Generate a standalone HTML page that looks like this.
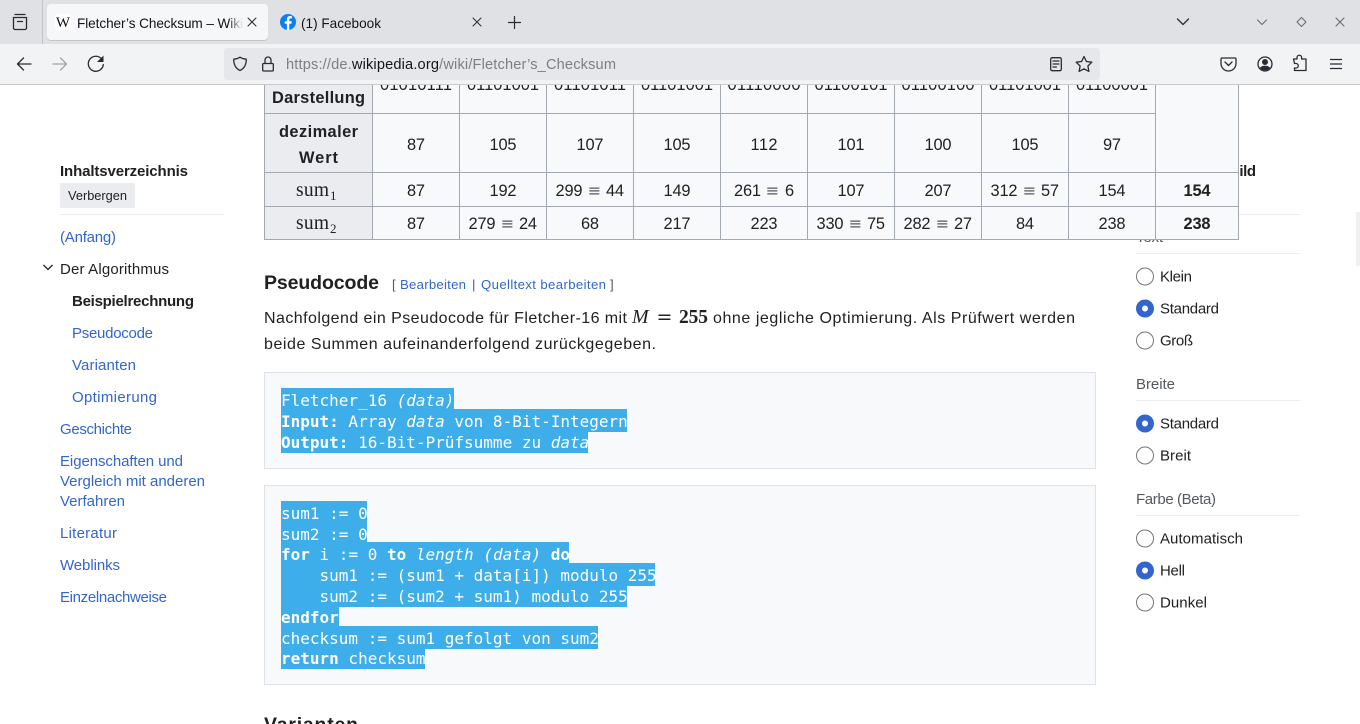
<!DOCTYPE html>
<html lang="de"><head><meta charset="utf-8"><title>Fletcher’s Checksum – Wikipedia</title>
<style>
html,body{margin:0;padding:0;background:#fff;overflow:hidden;width:1360px;height:724px}
svg{display:block}
text{font-family:"Liberation Sans",sans-serif;font-size:15px;fill:#202122;white-space:pre}
.b{font-weight:700}
.l{fill:#3366cc}
.g{fill:#54595d}
.n{font-size:16.4px;text-anchor:middle}
.h{font-size:16.4px;font-weight:700;text-anchor:middle}
.q{font-family:"DejaVu Sans",sans-serif;font-size:16px;text-anchor:middle;fill:#54595d}
.m{font-family:"Liberation Serif",serif;font-size:19.5px}
.s{font-family:"Liberation Serif",serif;font-size:13px}
.c{font-family:"DejaVu Sans Mono",monospace;font-size:16px;fill:#fff}
.c .b{font-weight:700}
.c .i{font-style:italic}
.e{font-size:13.200px}
.p{font-size:16px}
.ui{font-size:13.600px;fill:#15141a}
.ic{fill:none;stroke:#2b2a33;stroke-width:1.300;stroke-linecap:round;stroke-linejoin:round}
.tl line{stroke:#a2a9b1;stroke-width:1}
</style></head><body>
<svg width="1360" height="724" viewBox="0 0 1360 724" xmlns="http://www.w3.org/2000/svg">
<rect width="1360" height="724" fill="#fff"/>
<rect x="1356" y="212" width="4" height="54" fill="#f0f0f0"/>

<!-- left sidebar -->
<text class="b" x="60" y="176" textLength="128">Inhaltsverzeichnis</text>
<rect x="60" y="183" width="75" height="25" rx="2" fill="#eaecf0"/>
<text x="68" y="200" style="font-size:12.800px" textLength="59">Verbergen</text>
<rect x="60" y="214" width="164" height="1" fill="#eaecf0"/>
<text class="l" x="60" y="242" textLength="56">(Anfang)</text>
<path d="M43.500 265l4.500 4.500 4.500-4.500" fill="none" stroke="#202122" stroke-width="1.300"/>
<text x="60" y="274" textLength="109">Der Algorithmus</text>
<text class="b" x="72" y="306" textLength="122">Beispielrechnung</text>
<text class="l" x="72" y="338" textLength="81">Pseudocode</text>
<text class="l" x="72" y="370" textLength="64">Varianten</text>
<text class="l" x="72" y="402" textLength="85">Optimierung</text>
<text class="l" x="60" y="434" textLength="72">Geschichte</text>
<text class="l" x="60" y="466" textLength="123">Eigenschaften und</text>
<text class="l" x="60" y="486" textLength="145">Vergleich mit anderen</text>
<text class="l" x="60" y="506" textLength="65">Verfahren</text>
<text class="l" x="60" y="538" textLength="57">Literatur</text>
<text class="l" x="60" y="570" textLength="60">Weblinks</text>
<text class="l" x="60" y="602" textLength="107">Einzelnachweise</text>

<!-- right sidebar -->
<text class="b" x="1229" y="176" textLength="27">Bild</text>
<rect x="1136" y="214" width="164" height="1" fill="#eaecf0"/>
<text class="g" x="1136" y="242" textLength="27">Text</text>
<rect x="1136" y="253" width="164" height="1" fill="#eaecf0"/>
<g fill="#fff" stroke="#72777d" stroke-width="1">
<circle cx="1145" cy="276.500" r="8.500"/><circle cx="1145" cy="340.500" r="8.500"/>
<circle cx="1145" cy="455.500" r="8.500"/><circle cx="1145" cy="538.500" r="8.500"/><circle cx="1145" cy="602.500" r="8.500"/>
</g>
<g fill="#3366cc">
<circle cx="1145" cy="308.500" r="9"/><circle cx="1145" cy="423.500" r="9"/><circle cx="1145" cy="570.500" r="9"/>
</g>
<g fill="#fff">
<circle cx="1145" cy="308.500" r="3"/><circle cx="1145" cy="423.500" r="3"/><circle cx="1145" cy="570.500" r="3"/>
</g>
<text x="1160" y="281.500" textLength="32">Klein</text>
<text x="1160" y="313.500" textLength="59">Standard</text>
<text x="1160" y="345.500" textLength="33">Groß</text>
<text class="g" x="1136" y="389" textLength="39">Breite</text>
<rect x="1136" y="400" width="164" height="1" fill="#eaecf0"/>
<text x="1160" y="428.500" textLength="59">Standard</text>
<text x="1160" y="460.500" textLength="31">Breit</text>
<text class="g" x="1136" y="504" textLength="80">Farbe (Beta)</text>
<rect x="1136" y="515" width="164" height="1" fill="#eaecf0"/>
<text x="1160" y="543.500" textLength="83">Automatisch</text>
<text x="1160" y="575.500" textLength="25">Hell</text>
<text x="1160" y="607.500" textLength="47">Dunkel</text>

<!-- table -->
<rect x="264" y="80" width="974" height="160" fill="#f8f9fa"/>
<rect x="264" y="80" width="108" height="160" fill="#eaecf0"/>
<g class="tl">
<line x1="264.500" y1="80" x2="264.500" y2="240"/>
<line x1="372.500" y1="80" x2="372.500" y2="240"/>
<line x1="459.500" y1="80" x2="459.500" y2="240"/>
<line x1="546.500" y1="80" x2="546.500" y2="240"/>
<line x1="633.500" y1="80" x2="633.500" y2="240"/>
<line x1="720.500" y1="80" x2="720.500" y2="240"/>
<line x1="807.500" y1="80" x2="807.500" y2="240"/>
<line x1="894.500" y1="80" x2="894.500" y2="240"/>
<line x1="981.500" y1="80" x2="981.500" y2="240"/>
<line x1="1068.500" y1="80" x2="1068.500" y2="240"/>
<line x1="1155.500" y1="80" x2="1155.500" y2="240"/>
<line x1="1238.500" y1="80" x2="1238.500" y2="240"/>
<line x1="264" y1="113.500" x2="1155" y2="113.500"/>
<line x1="264" y1="172.500" x2="1239" y2="172.500"/>
<line x1="264" y1="206.500" x2="1239" y2="206.500"/>
<line x1="264" y1="239.500" x2="1239" y2="239.500"/>
</g>
<text class="h" x="318.500" y="103" textLength="93">Darstellung</text>
<text class="h" x="318.500" y="137" textLength="79">dezimaler</text>
<text class="h" x="318.500" y="163" textLength="39">Wert</text>
<text class="m" x="296" y="196" textLength="33">sum</text><text class="s" x="330" y="200">1</text>
<text class="m" x="296" y="229" textLength="33">sum</text><text class="s" x="330" y="233">2</text>

<text class="n" x="416" y="90" textLength="72">01010111</text>
<text class="n" x="503" y="90" textLength="72">01101001</text>
<text class="n" x="590" y="90" textLength="72">01101011</text>
<text class="n" x="677" y="90" textLength="72">01101001</text>
<text class="n" x="764" y="90" textLength="73">01110000</text>
<text class="n" x="851" y="90" textLength="73">01100101</text>
<text class="n" x="938" y="90" textLength="73">01100100</text>
<text class="n" x="1025" y="90" textLength="72">01101001</text>
<text class="n" x="1112" y="90" textLength="72">01100001</text>

<text class="n" x="416" y="150" textLength="18">87</text>
<text class="n" x="503" y="150" textLength="27">105</text>
<text class="n" x="590" y="150" textLength="27">107</text>
<text class="n" x="677" y="150" textLength="27">105</text>
<text class="n" x="764" y="150" textLength="27">112</text>
<text class="n" x="851" y="150" textLength="27">101</text>
<text class="n" x="938" y="150" textLength="27">100</text>
<text class="n" x="1025" y="150" textLength="27">105</text>
<text class="n" x="1112" y="150" textLength="18">97</text>

<text class="n" x="416" y="196" textLength="18">87</text>
<text class="n" x="503" y="196" textLength="27">192</text>
<text class="n" x="569" y="196" textLength="27">299</text><text class="q" x="594.500" y="196">≡</text><text class="n" x="615" y="196" textLength="18">44</text>
<text class="n" x="677" y="196" textLength="27">149</text>
<text class="n" x="747.500" y="196" textLength="27">261</text><text class="q" x="772.500" y="196">≡</text><text class="n" x="789.500" y="196">6</text>
<text class="n" x="851" y="196" textLength="27">107</text>
<text class="n" x="938" y="196" textLength="27">207</text>
<text class="n" x="1004" y="196" textLength="27">312</text><text class="q" x="1029.500" y="196">≡</text><text class="n" x="1050" y="196" textLength="18">57</text>
<text class="n" x="1112" y="196" textLength="27">154</text>
<text class="h" x="1197" y="196" textLength="27">154</text>

<text class="n" x="416" y="229" textLength="18">87</text>
<text class="n" x="482" y="229" textLength="27">279</text><text class="q" x="507.500" y="229">≡</text><text class="n" x="528" y="229" textLength="18">24</text>
<text class="n" x="590" y="229" textLength="18">68</text>
<text class="n" x="677" y="229" textLength="27">217</text>
<text class="n" x="764" y="229" textLength="27">223</text>
<text class="n" x="830" y="229" textLength="27">330</text><text class="q" x="855.500" y="229">≡</text><text class="n" x="876" y="229" textLength="18">75</text>
<text class="n" x="917" y="229" textLength="27">282</text><text class="q" x="942.500" y="229">≡</text><text class="n" x="963" y="229" textLength="18">27</text>
<text class="n" x="1025" y="229" textLength="18">84</text>
<text class="n" x="1112" y="229" textLength="27">238</text>
<text class="h" x="1197" y="229" textLength="27">238</text>

<!-- heading + paragraph -->
<text class="b" x="264" y="289" style="font-size:19.500px" textLength="115">Pseudocode</text>
<text class="e g" x="392" y="289">[</text>
<text class="e l" x="400" y="289" textLength="66">Bearbeiten</text>
<text class="e g" x="472" y="289">|</text>
<text class="e l" x="481" y="289" textLength="125">Quelltext bearbeiten</text>
<text class="e g" x="610" y="289">]</text>
<text class="p" x="264" y="323" textLength="363">Nachfolgend ein Pseudocode für Fletcher-16 mit</text>
<text class="m" x="632" y="323" style="font-style:italic;font-size:20px">M</text>
<text x="664.500" y="323" style="font-family:'DejaVu Sans',sans-serif;font-size:19px;text-anchor:middle;fill:#202122">=</text>
<text class="m" x="679" y="323" style="font-size:19.500px;font-weight:700" textLength="29">255</text>
<text class="p" x="713" y="323" textLength="362">ohne jegliche Optimierung. Als Prüfwert werden</text>
<text class="p" x="264" y="349" textLength="392">beide Summen aufeinanderfolgend zurückgegeben.</text>

<!-- code box 1 -->
<rect x="264.500" y="372.500" width="831" height="96" fill="#f8f9fa" stroke="#dfe2e8"/>
<g fill="#3daee9">
<rect x="281" y="388" width="173" height="21"/>
<rect x="281" y="409" width="346" height="23"/>
<rect x="281" y="432" width="307" height="21"/>
</g>
<text class="c" x="281" y="406">Fletcher_16 <tspan class="i">(data)</tspan></text>
<text class="c" x="281" y="427"><tspan class="b">Input:</tspan> Array <tspan class="i">data</tspan> von 8-Bit-Integern</text>
<text class="c" x="281" y="448"><tspan class="b">Output:</tspan> 16-Bit-Prüfsumme zu <tspan class="i">data</tspan></text>

<!-- code box 2 -->
<rect x="264.500" y="485.500" width="831" height="199" fill="#f8f9fa" stroke="#dfe2e8"/>
<g fill="#3daee9">
<rect x="281" y="501" width="86" height="41"/>
<rect x="281" y="542" width="288" height="21"/>
<rect x="281" y="563" width="374" height="23"/>
<rect x="281" y="586" width="346" height="21"/>
<rect x="281" y="607" width="58" height="19"/>
<rect x="281" y="626" width="317" height="23"/>
<rect x="281" y="649" width="144" height="20"/>
</g>
<text class="c" x="281" y="519">sum1 := 0</text>
<text class="c" x="281" y="540">sum2 := 0</text>
<text class="c" x="281" y="560"><tspan class="b">for</tspan> i := 0 <tspan class="b">to</tspan> <tspan class="i">length (data)</tspan> <tspan class="b">do</tspan></text>
<text class="c" x="281" y="581">    sum1 := (sum1 + data[i]) modulo 255</text>
<text class="c" x="281" y="602">    sum2 := (sum2 + sum1) modulo 255</text>
<text class="c" x="281" y="623"><tspan class="b">endfor</tspan></text>
<text class="c" x="281" y="644">checksum := sum1 gefolgt von sum2</text>
<text class="c" x="281" y="664"><tspan class="b">return</tspan> checksum</text>

<text class="b" x="264" y="731" style="font-size:19.500px" textLength="94">Varianten</text>

<!-- browser chrome -->
<rect x="0" y="0" width="1360" height="44" fill="#e0e1e4"/>
<rect x="0" y="44" width="1360" height="40" fill="#f2f3f5"/>
<rect x="0" y="84" width="1360" height="1" fill="#c9cacc"/>
<rect x="42" y="0" width="1" height="44" fill="#c4c5c8"/>
<rect x="47" y="4" width="221" height="36" rx="4" fill="#000" opacity=".12" transform="translate(0 1)"/>
<rect x="47" y="4" width="221" height="36" rx="4" fill="#f6f7f8"/>
<rect x="55" y="14" width="16" height="16" rx="2" fill="#fff"/>
<text x="63" y="27" style="font-family:'Liberation Serif',serif;font-size:15px;text-anchor:middle;fill:#111">W</text>
<text class="ui" x="77" y="28" textLength="166">Fletcher’s Checksum – Wiki</text>
<defs><linearGradient id="f"><stop offset="0" stop-color="#f6f7f8" stop-opacity="0"/><stop offset="1" stop-color="#f6f7f8"/></linearGradient></defs>
<rect x="228" y="12" width="15" height="22" fill="url(#f)"/>
<rect x="243" y="12" width="5" height="22" fill="#f6f7f8"/>
<path class="ic" style="stroke-width:1" d="M248 18l8 8M256 18l-8 8"/>
<circle cx="288" cy="22" r="8" fill="#0b7ef0"/>
<path d="M289.300 30v-6.300h2.100l.4-2.500h-2.500v-1.500c0-.8.3-1.300 1.300-1.300h1.300v-2.200c-.5-.1-1.100-.2-1.800-.2-1.900 0-3.200 1.200-3.200 3.300v1.900h-2.200v2.500h2.200V30z" fill="#fff"/>
<text class="ui" x="301" y="28" textLength="80">(1) Facebook</text>
<path class="ic" style="stroke-width:1" d="M473 18l8 8M481 18l-8 8"/>
<path class="ic" style="stroke-width:1.200" d="M514.500 16.500v12M508.500 22.500h12"/>
<path class="ic" d="M13.500 18.500h13v10.500a1.500 1.500 0 0 1-1.500 1.500h-10a1.500 1.500 0 0 1-1.500-1.500zM15 15.500h10M17.500 22.500h5" transform="translate(0 -1)"/>
<path class="ic" d="M1177.500 19l5.500 5.500 5.500-5.500"/>
<path class="ic" style="stroke:#6b6c70;stroke-width:1.100" d="M1257.500 20l4.500 4.500 4.500-4.500M1301.500 17.500l4.500 4.500-4.500 4.500-4.500-4.500zM1336 18l8 8M1344 18l-8 8"/>

<path class="ic" d="M31 64H17.500M23.500 58l-6 6 6 6"/>
<path class="ic" style="stroke:#a3a4a8" d="M53 64h13.500M60.500 58l6 6-6 6"/>
<path class="ic" d="M102 59.500a7.500 7.500 0 1 0 1.300 5"/>
<path d="M103.500 55.500v6.500H97z" fill="#2b2a33"/>

<rect x="224" y="48" width="876" height="32" rx="4" fill="#e6e7ea"/>
<path class="ic" d="M240 57.200c2 1.400 4 1.800 6.300 2 0 5-1.800 9-6.300 11.300-4.500-2.300-6.300-6.300-6.300-11.300 2.300-.2 4.300-.6 6.300-2z"/>
<rect class="ic" x="262.700" y="63.500" width="10.600" height="7.500" rx="1"/>
<path class="ic" d="M265 63.500V60a3 3 0 0 1 6 0v3.500"/>
<text x="286" y="69" style="font-size:14.600px;fill:#7d7e83" textLength="330">https://de.<tspan style="fill:#15141a">wikipedia.org</tspan>/wiki/Fletcher’s_Checksum</text>
<rect class="ic" x="1050.700" y="57.700" width="10.600" height="13" rx="1.500"/>
<path class="ic" style="stroke-width:1.200" d="M1053 61h6M1053 64h6M1053 67h3.500"/>
<path class="ic" d="M1084 56.500l2.400 5 5.400.7-3.900 3.800 1 5.400-4.900-2.600-4.900 2.600 1-5.400-3.900-3.800 5.400-.7z"/>

<path class="ic" d="M1222 58h13a1 1 0 0 1 1 1v4.500a7.500 7.500 0 0 1-15 0V59a1 1 0 0 1 1-1z"/>
<path class="ic" d="M1225 62l3.500 3.500 3.500-3.500"/>
<circle class="ic" cx="1265" cy="64" r="7"/>
<circle cx="1265" cy="62" r="3" fill="#2b2a33"/>
<path d="M1259.800 68c1-1.700 3-2.300 5.200-2.300s4.200.6 5.200 2.300c-1.300 1.600-3.100 2.400-5.200 2.400s-3.900-.8-5.200-2.400z" fill="#2b2a33"/>
<path class="ic" d="M1293.500 60h3.500v-1.500a2.300 2.300 0 0 1 4.600 0V60h4.400v11.500h-11.500v-2.500h1.500a2.200 2.200 0 0 0 0-4.500h-1.500z" transform="translate(0 -1)"/>
<path class="ic" d="M1330.500 59.500h11M1330.500 64h11M1330.500 68.500h11"/>
</svg>
</body></html>
